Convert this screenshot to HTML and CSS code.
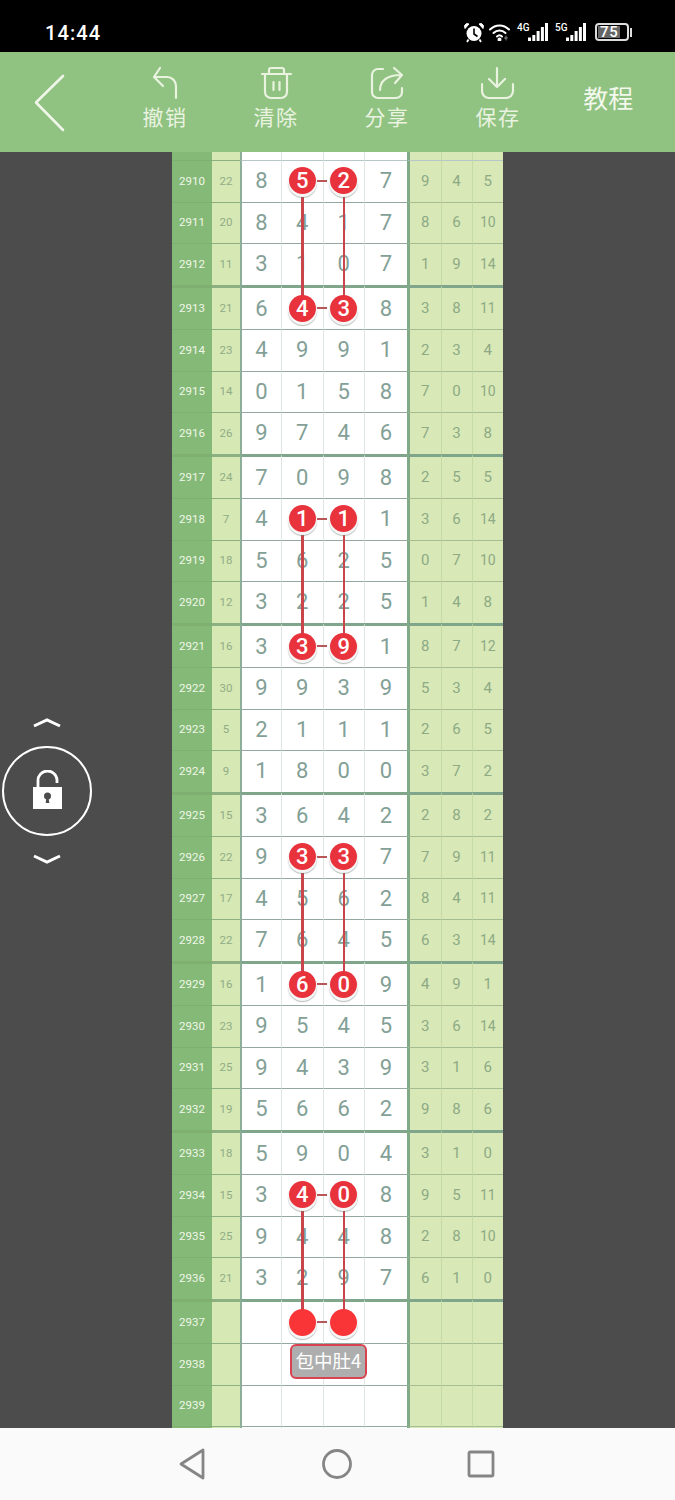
FILE: index.html
```html
<!DOCTYPE html>
<html lang="zh">
<head>
<meta charset="utf-8">
<title>走势图</title>
<link rel="stylesheet" href="styles.css">
</head>
<body>
<div class="screen">
  <div class="status">
    <span class="time">14:44</span>
    <div class="status-icons">
      <svg class="alarm" width="20" height="21" viewBox="0 0 20 21"><circle cx="10" cy="11.5" r="7.5" fill="#fff"/><path d="M10 6.5V12l3.5 2.5" fill="none" stroke="#000" stroke-width="1.6"/><path d="M1 6.5 5 2 2.5 1.5 0.5 3.5ZM19 6.5 15 2l2.5-.5 2 2Z" fill="#fff" stroke="#fff"/><path d="M4.500 17.500 3 20M15.500 17.500 17 20" stroke="#fff" stroke-width="1.800"/></svg>
      <svg class="wifi" width="22" height="18" viewBox="0 0 22 18" fill="none" stroke="#fff" stroke-width="2" stroke-linecap="round"><path d="M1 6.500C6.500 1 14.500 1 20 6.500"/><path d="M4.500 10C8 6.500 13 6.500 16.500 10"/><path d="M8 13.500C9.500 12 11.500 12 13 13.500"/><circle cx="10.500" cy="16.500" r="1" fill="#fff"/><path d="M17 13v4M15.500 15h3" stroke="#888" stroke-width="1"/></svg>
      <div class="net"><small class="net-label">4G</small><svg width="20" height="18" viewBox="0 0 20 18" fill="#fff"><rect x="0" y="14.500" width="3" height="3.500"/><rect x="4.300" y="12" width="3" height="6"/><rect x="8.600" y="8" width="3" height="10"/><rect x="12.900" y="4" width="3" height="14"/><rect x="17" y="0" width="3" height="18"/></svg></div>
      <div class="net"><small class="net-label">5G</small><svg width="20" height="18" viewBox="0 0 20 18" fill="#fff"><rect x="0" y="14.500" width="3" height="3.500"/><rect x="4.300" y="12" width="3" height="6"/><rect x="8.600" y="8" width="3" height="10"/><rect x="12.900" y="4" width="3" height="14"/><rect x="17" y="0" width="3" height="18"/></svg></div>
      <div class="battery"><span class="battery-level">75</span></div>
      <span class="battery-nub"></span>
    </div>
  </div>

  <header class="toolbar">
    <div class="back">
      <svg width="32" height="58" viewBox="0 0 32 58" fill="none" stroke="#f0f6ea" stroke-width="2.600" stroke-linecap="round" stroke-linejoin="round"><path d="M30 2 3 28.500 30 56"/></svg>
    </div>
    <div class="tool">
      <svg class="tool-icon" width="34" height="34" viewBox="0 0 34 34"><path d="M12 2 6 11l9 9M6 11H19a9 9 0 0 1 9 9V32"/></svg>
      <span class="tool-label">撤销</span>
    </div>
    <div class="tool">
      <svg class="tool-icon" width="34" height="34" viewBox="0 0 34 34"><path d="M3 8H32M10 8V4a2 2 0 0 1 2-2H23a2 2 0 0 1 2 2V8M6 8V26a6 6 0 0 0 6 6H22a6 6 0 0 0 6-6V8M14.500 16V24M20.500 16V24"/></svg>
      <span class="tool-label">清除</span>
    </div>
    <div class="tool">
      <svg class="tool-icon" width="34" height="34" viewBox="0 0 34 34"><path d="M13 3H8a6 6 0 0 0-6 6V26a6 6 0 0 0 6 6H26a6 6 0 0 0 6-6V22M10 24C10 15 17 9 31 9M24 2l8 7-7 8"/></svg>
      <span class="tool-label">分享</span>
    </div>
    <div class="tool">
      <svg class="tool-icon" width="34" height="34" viewBox="0 0 34 34"><path d="M16 2V21M8 13l8 8 8-8M1 18V25a7 7 0 0 0 7 7H25a7 7 0 0 0 7-7V18"/></svg>
      <span class="tool-label">保存</span>
    </div>
    <div class="tutorial">教程</div>
  </header>

  <main class="stage">
    <div class="lock-widget">
      <svg width="30" height="10" viewBox="0 0 30 10" fill="none" stroke="#fff" stroke-width="3"><path d="M2 8 15 2l13 6"/></svg>
      <div class="lock-ring">
        <svg width="30" height="40" viewBox="0 0 30 40"><path d="M5 18V11a9.500 9.500 0 0 1 19-1v3" fill="none" stroke="#fff" stroke-width="2.800"/><path d="M0 17H29V39H0Z" fill="#fff"/><circle cx="14.500" cy="26" r="3.500" fill="#4c4c4c"/><path d="M13.500 27h2l.8 6h-3.600Z" fill="#4c4c4c"/></svg>
      </div>
      <svg width="30" height="10" viewBox="0 0 30 10" fill="none" stroke="#fff" stroke-width="3"><path d="M2 2l13 6 13-6"/></svg>
    </div>

    <div class="chart">
      <div class="row stub"><span></span><span></span><span></span><span></span><span></span><span></span><span></span><span></span><span></span></div>
      <div class="row top"><span>2910</span><span>22</span><span>8</span><span class="down link"><b class="ball">5</b></span><span class="down"><b class="ball">2</b></span><span>7</span><span>9</span><span>4</span><span>5</span></div>
      <div class="row"><span>2911</span><span>20</span><span>8</span><span>4</span><span>1</span><span>7</span><span>8</span><span>6</span><span class="wide">10</span></div>
      <div class="row"><span>2912</span><span>11</span><span>3</span><span>1</span><span>0</span><span>7</span><span>1</span><span>9</span><span class="wide">14</span></div>

      <div class="row first"><span>2913</span><span>21</span><span>6</span><span class="link"><b class="ball">4</b></span><span><b class="ball">3</b></span><span>8</span><span>3</span><span>8</span><span class="wide">11</span></div>
      <div class="row"><span>2914</span><span>23</span><span>4</span><span>9</span><span>9</span><span>1</span><span>2</span><span>3</span><span>4</span></div>
      <div class="row"><span>2915</span><span>14</span><span>0</span><span>1</span><span>5</span><span>8</span><span>7</span><span>0</span><span class="wide">10</span></div>
      <div class="row"><span>2916</span><span>26</span><span>9</span><span>7</span><span>4</span><span>6</span><span>7</span><span>3</span><span>8</span></div>

      <div class="row first"><span>2917</span><span>24</span><span>7</span><span>0</span><span>9</span><span>8</span><span>2</span><span>5</span><span>5</span></div>
      <div class="row"><span>2918</span><span>7</span><span>4</span><span class="down link"><b class="ball">1</b></span><span class="down"><b class="ball">1</b></span><span>1</span><span>3</span><span>6</span><span class="wide">14</span></div>
      <div class="row"><span>2919</span><span>18</span><span>5</span><span>6</span><span>2</span><span>5</span><span>0</span><span>7</span><span class="wide">10</span></div>
      <div class="row"><span>2920</span><span>12</span><span>3</span><span>2</span><span>2</span><span>5</span><span>1</span><span>4</span><span>8</span></div>

      <div class="row first"><span>2921</span><span>16</span><span>3</span><span class="link"><b class="ball">3</b></span><span><b class="ball">9</b></span><span>1</span><span>8</span><span>7</span><span class="wide">12</span></div>
      <div class="row"><span>2922</span><span>30</span><span>9</span><span>9</span><span>3</span><span>9</span><span>5</span><span>3</span><span>4</span></div>
      <div class="row"><span>2923</span><span>5</span><span>2</span><span>1</span><span>1</span><span>1</span><span>2</span><span>6</span><span>5</span></div>
      <div class="row"><span>2924</span><span>9</span><span>1</span><span>8</span><span>0</span><span>0</span><span>3</span><span>7</span><span>2</span></div>

      <div class="row first"><span>2925</span><span>15</span><span>3</span><span>6</span><span>4</span><span>2</span><span>2</span><span>8</span><span>2</span></div>
      <div class="row"><span>2926</span><span>22</span><span>9</span><span class="down link"><b class="ball">3</b></span><span class="down"><b class="ball">3</b></span><span>7</span><span>7</span><span>9</span><span class="wide">11</span></div>
      <div class="row"><span>2927</span><span>17</span><span>4</span><span>5</span><span>6</span><span>2</span><span>8</span><span>4</span><span class="wide">11</span></div>
      <div class="row"><span>2928</span><span>22</span><span>7</span><span>6</span><span>4</span><span>5</span><span>6</span><span>3</span><span class="wide">14</span></div>

      <div class="row first"><span>2929</span><span>16</span><span>1</span><span class="link"><b class="ball">6</b></span><span><b class="ball">0</b></span><span>9</span><span>4</span><span>9</span><span>1</span></div>
      <div class="row"><span>2930</span><span>23</span><span>9</span><span>5</span><span>4</span><span>5</span><span>3</span><span>6</span><span class="wide">14</span></div>
      <div class="row"><span>2931</span><span>25</span><span>9</span><span>4</span><span>3</span><span>9</span><span>3</span><span>1</span><span>6</span></div>
      <div class="row"><span>2932</span><span>19</span><span>5</span><span>6</span><span>6</span><span>2</span><span>9</span><span>8</span><span>6</span></div>

      <div class="row first"><span>2933</span><span>18</span><span>5</span><span>9</span><span>0</span><span>4</span><span>3</span><span>1</span><span>0</span></div>
      <div class="row"><span>2934</span><span>15</span><span>3</span><span class="down link"><b class="ball">4</b></span><span class="down"><b class="ball">0</b></span><span>8</span><span>9</span><span>5</span><span class="wide">11</span></div>
      <div class="row"><span>2935</span><span>25</span><span>9</span><span>4</span><span>4</span><span>8</span><span>2</span><span>8</span><span class="wide">10</span></div>
      <div class="row"><span>2936</span><span>21</span><span>3</span><span>2</span><span>9</span><span>7</span><span>6</span><span>1</span><span>0</span></div>

      <div class="row first"><span>2937</span><span></span><span></span><span class="link"><b class="ball blank"></b></span><span><b class="ball blank"></b></span><span></span><span></span><span></span><span></span></div>
      <div class="row"><span>2938</span><span></span><span></span><span><em class="badge">包中肚4</em></span><span></span><span></span><span></span><span></span><span></span></div>
      <div class="row"><span>2939</span><span></span><span></span><span></span><span></span><span></span><span></span><span></span><span></span></div>
      <div class="row"><span></span><span></span><span></span><span></span><span></span><span></span><span></span><span></span><span></span></div>
    </div>
  </main>

  <nav class="navbar">
    <svg width="30" height="34" viewBox="0 0 30 34" fill="none" stroke="#858585" stroke-width="2.800" stroke-linejoin="round"><path d="M25 3V31L3 17Z"/></svg>
    <svg width="30" height="30" viewBox="0 0 30 30" fill="none" stroke="#858585" stroke-width="2.800"><circle cx="15" cy="15" r="13.500"/></svg>
    <svg width="30" height="30" viewBox="0 0 30 30" fill="none" stroke="#858585" stroke-width="2.800" stroke-linejoin="round"><rect x="3" y="3" width="24" height="24" rx="1.500"/></svg>
  </nav>
</div>
</body>
</html>
```

FILE: styles.css
```css
* { box-sizing: border-box; }

html, body {
  margin: 0;
  padding: 0;
}

.screen {
  width: 675px;
  height: 1500px;
  display: flex;
  flex-direction: column;
  overflow: hidden;
  background: #4c4c4c;
  font-family: Roboto, "Noto Sans CJK SC", sans-serif;
}

/* status bar */
.status {
  height: 52px;
  flex: none;
  display: flex;
  align-items: center;
  padding: 13px 43px 0 45px;
  background: #000;
  color: #fff;
}

.time {
  font-size: 20px;
  font-weight: 500;
  letter-spacing: 1.1px;
}

.status-icons {
  margin-left: auto;
  margin-top: -1px;
  display: flex;
  align-items: center;
}

.alarm { margin-right: 5px; }
.wifi { margin-right: 6px; }

.net {
  display: flex;
  align-items: flex-end;
  height: 18px;
  margin-right: 7px;
}

.net-label {
  font-size: 10px;
  font-weight: 500;
  line-height: 9px;
  align-self: flex-start;
  width: 11px;
  white-space: nowrap;
}

.battery {
  width: 34px;
  height: 18px;
  margin-left: 2px;
  border: 2px solid #ddd;
  border-radius: 4px;
  padding: 1px;
}

.battery-level {
  display: block;
  width: 22px;
  height: 12px;
  background: #666;
  color: #fff;
  font-size: 15px;
  font-weight: 500;
  line-height: 12px;
  letter-spacing: 0.6px;
  white-space: nowrap;
  padding-left: 2px;
}

.battery-nub {
  width: 2px;
  height: 9px;
  margin-left: 1px;
  background: #ddd;
}

/* toolbar */
.toolbar {
  height: 100px;
  flex: none;
  display: flex;
  background: #90c281;
  color: #e9f3e0;
  font-family: "Noto Sans CJK SC", sans-serif;
}

.back {
  width: 109.5px;
  flex: none;
  padding: 22px 0 0 33px;
}

.back svg { display: block; }

.tool {
  width: 111px;
  flex: none;
  display: flex;
  flex-direction: column;
  align-items: center;
  padding-top: 14px;
}

.tool-icon {
  display: block;
  fill: none;
  stroke: #e9f3e0;
  stroke-width: 2.200;
  stroke-linecap: round;
  stroke-linejoin: round;
}

.tool-label {
  margin-top: 2px;
  font-size: 21px;
  line-height: 28px;
  letter-spacing: 1.500px;
}

.tutorial {
  flex: 1;
  padding-top: 27px;
  padding-right: 12px;
  text-align: center;
  font-size: 25px;
  line-height: 37px;
  color: #f2f8ec;
}

/* chart area */
.stage {
  flex: 1;
  min-height: 0;
  position: relative;
  display: flex;
  justify-content: center;
  overflow: hidden;
}

.lock-widget {
  position: absolute;
  left: 2px;
  top: 566px;
  width: 90px;
  display: flex;
  flex-direction: column;
  align-items: center;
  gap: 18px;
}

.lock-widget > svg { display: block; }

.lock-ring {
  width: 90px;
  height: 90px;
  border: 2.500px solid #fff;
  border-radius: 50%;
  display: flex;
  align-items: center;
  justify-content: center;
  padding: 0 0 3px 1px;
}

.chart {
  width: 331px;
  flex: none;
}

.row {
  display: grid;
  grid-template-columns: 40px 28px 42px 41.500px 41.500px 42px 34.500px 31px 30.500px;
  height: 41.500px;
}

.row.first { height: 44.500px; }
.row.stub { height: 8px; }

.row > span {
  position: relative;
  display: flex;
  align-items: center;
  justify-content: center;
  border-top: 1px solid #93a8a2;
  padding-bottom: 1px;
}

.row.first > span {
  border-top-width: 3px;
  padding-bottom: 0;
}

.row.stub > span { border-top: 0; }

/* serial number */
.row > :nth-child(1) {
  background: #85b977;
  border-top-color: #7fb071;
  color: #f0f7e8;
  font-size: 11.500px;
}

/* sum column */
.row > :nth-child(2) {
  background: #d6e8b4;
  border-top-color: #8db083;
  color: #90ac85;
  font-size: 11.500px;
}

/* white digits */
.row > :nth-child(3),
.row > :nth-child(4),
.row > :nth-child(5),
.row > :nth-child(6) {
  background: #fff;
  color: #83a096;
  font-size: 22px;
  border-right: 1px solid #dfe7e2;
}

.row > :nth-child(3) { border-left: 2px solid #8dae98; }
.row > :nth-child(6) { border-right: 0; }

.row.top > :nth-child(n+3) { border-top-color: #b7c6c6; }
.row.first > :nth-child(n+3) { border-top-color: #7fa68a; }

/* right digits */
.row > :nth-child(n+7) {
  background: #d8e8b6;
  color: #8daa85;
  font-size: 15px;
  border-top-color: #a6bd94;
  border-right: 1px solid #c5dba6;
}

.row > :nth-child(7) { border-left: 3px solid #80a987; }
.row > :nth-child(9) { border-right: 0; }
.row > .wide { font-size: 14px; }

/* balls and connecting lines */
.ball {
  position: absolute;
  z-index: 2;
  left: 50%;
  top: 50%;
  width: 27px;
  height: 27px;
  margin: -14.500px 0 0 -13.500px;
  border-radius: 50%;
  display: flex;
  align-items: center;
  justify-content: center;
  background: #e8323c;
  color: #fff;
  font-size: 22px;
  font-weight: 500;
  box-shadow: 0 2px 0 1px #f6f6f6, 0 3px 1px 1px rgba(110, 125, 115, 0.5);
}

.first .ball { margin-top: -13.500px; }
.ball.blank { background: #f93538; }

.down::before {
  content: "";
  position: absolute;
  z-index: 1;
  left: 50%;
  top: 50%;
  width: 2.500px;
  height: 128px;
  margin-left: -1.250px;
  background: #c8454c;
}

.link::after {
  content: "";
  position: absolute;
  z-index: 1;
  left: calc(50% + 15px);
  top: 50%;
  width: 10px;
  height: 2px;
  margin-top: -1px;
  background: #b9565a;
}

.first .link::after { margin-top: -1px; }

.badge {
  position: absolute;
  z-index: 3;
  left: 8px;
  top: 0;
  width: 77px;
  height: 35px;
  border: 2px solid #d8434f;
  border-radius: 6px;
  background: #aeaeae;
  color: #fff;
  font-family: "Noto Sans CJK SC", sans-serif;
  font-style: normal;
  font-size: 18.500px;
  line-height: 29px;
  text-align: center;
  white-space: nowrap;
}

/* navigation bar */
.navbar {
  height: 72px;
  flex: none;
  display: flex;
  align-items: center;
  justify-content: center;
  gap: 114px;
  padding-right: 1px;
  background: #fafafa;
}

.navbar svg { display: block; }
```
